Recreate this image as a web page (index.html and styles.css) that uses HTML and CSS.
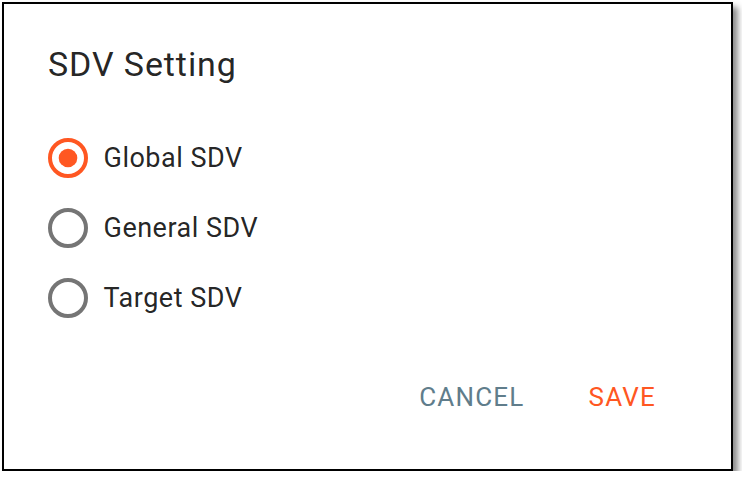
FILE: index.html
```html
<!DOCTYPE html>
<html>
<head>
<meta charset="utf-8">
<link rel="stylesheet" href="styles.css">
</head>
<body>
<div class="dialog">
  <h2 class="title">SDV Setting</h2>
  <div class="group">
    <label class="option">
      <svg class="radio checked" viewBox="0 0 40 40" width="40" height="40"><circle cx="20" cy="20" r="18" fill="none" stroke="currentColor" stroke-width="4"/><circle cx="20" cy="20" r="9.3" fill="currentColor"/></svg>
      <span class="label">Global SDV</span>
    </label>
    <label class="option">
      <svg class="radio" viewBox="0 0 40 40" width="40" height="40"><circle cx="20" cy="20" r="18" fill="none" stroke="currentColor" stroke-width="4"/></svg>
      <span class="label">General SDV</span>
    </label>
    <label class="option">
      <svg class="radio" viewBox="0 0 40 40" width="40" height="40"><circle cx="20" cy="20" r="18" fill="none" stroke="currentColor" stroke-width="4"/></svg>
      <span class="label">Target SDV</span>
    </label>
  </div>
  <div class="actions">
    <button class="btn cancel">CANCEL</button>
    <button class="btn save">SAVE</button>
  </div>
</div>
</body>
</html>
```
FILE: styles.css
```css
html, body {
  margin: 0;
  padding: 0;
  background: #fff;
}
body {
  font-family: Roboto, "Liberation Sans", sans-serif;
  color: rgba(0, 0, 0, 0.87);
}
.dialog {
  box-sizing: border-box;
  width: 731px;
  height: 469px;
  margin: 2px 0 0 2px;
  border: 2px solid #000;
  background: #fff;
  box-shadow: 5px 5px 6px rgba(0, 0, 0, 0.45);
  display: flex;
  flex-direction: column;
}
.title {
  margin: 0;
  padding: 40px 0 0 44px;
  font-size: 34px;
  font-weight: 400;
  letter-spacing: 0.9px;
  line-height: 40px;
}
.group {
  display: flex;
  flex-direction: column;
  margin-top: 39px;
  padding-left: 43.5px;
}
.option {
  display: flex;
  align-items: center;
  height: 70px;
  gap: 16px;
}
.radio {
  color: #757575;
  display: block;
}
.radio.checked {
  color: #ff5722;
}
.label {
  font-size: 27px;
  line-height: 34px;
  letter-spacing: 0.5px;
}
.actions {
  display: flex;
  justify-content: flex-end;
  gap: 64px;
  margin-top: 44px;
  padding-right: 75px;
}
.btn {
  border: none;
  background: none;
  padding: 0;
  font-family: Roboto, "Liberation Sans", sans-serif;
  font-size: 26px;
  line-height: 40px;
  letter-spacing: 1.2px;
}
.cancel {
  color: #607d8b;
}
.save {
  color: #ff5722;
}
```
